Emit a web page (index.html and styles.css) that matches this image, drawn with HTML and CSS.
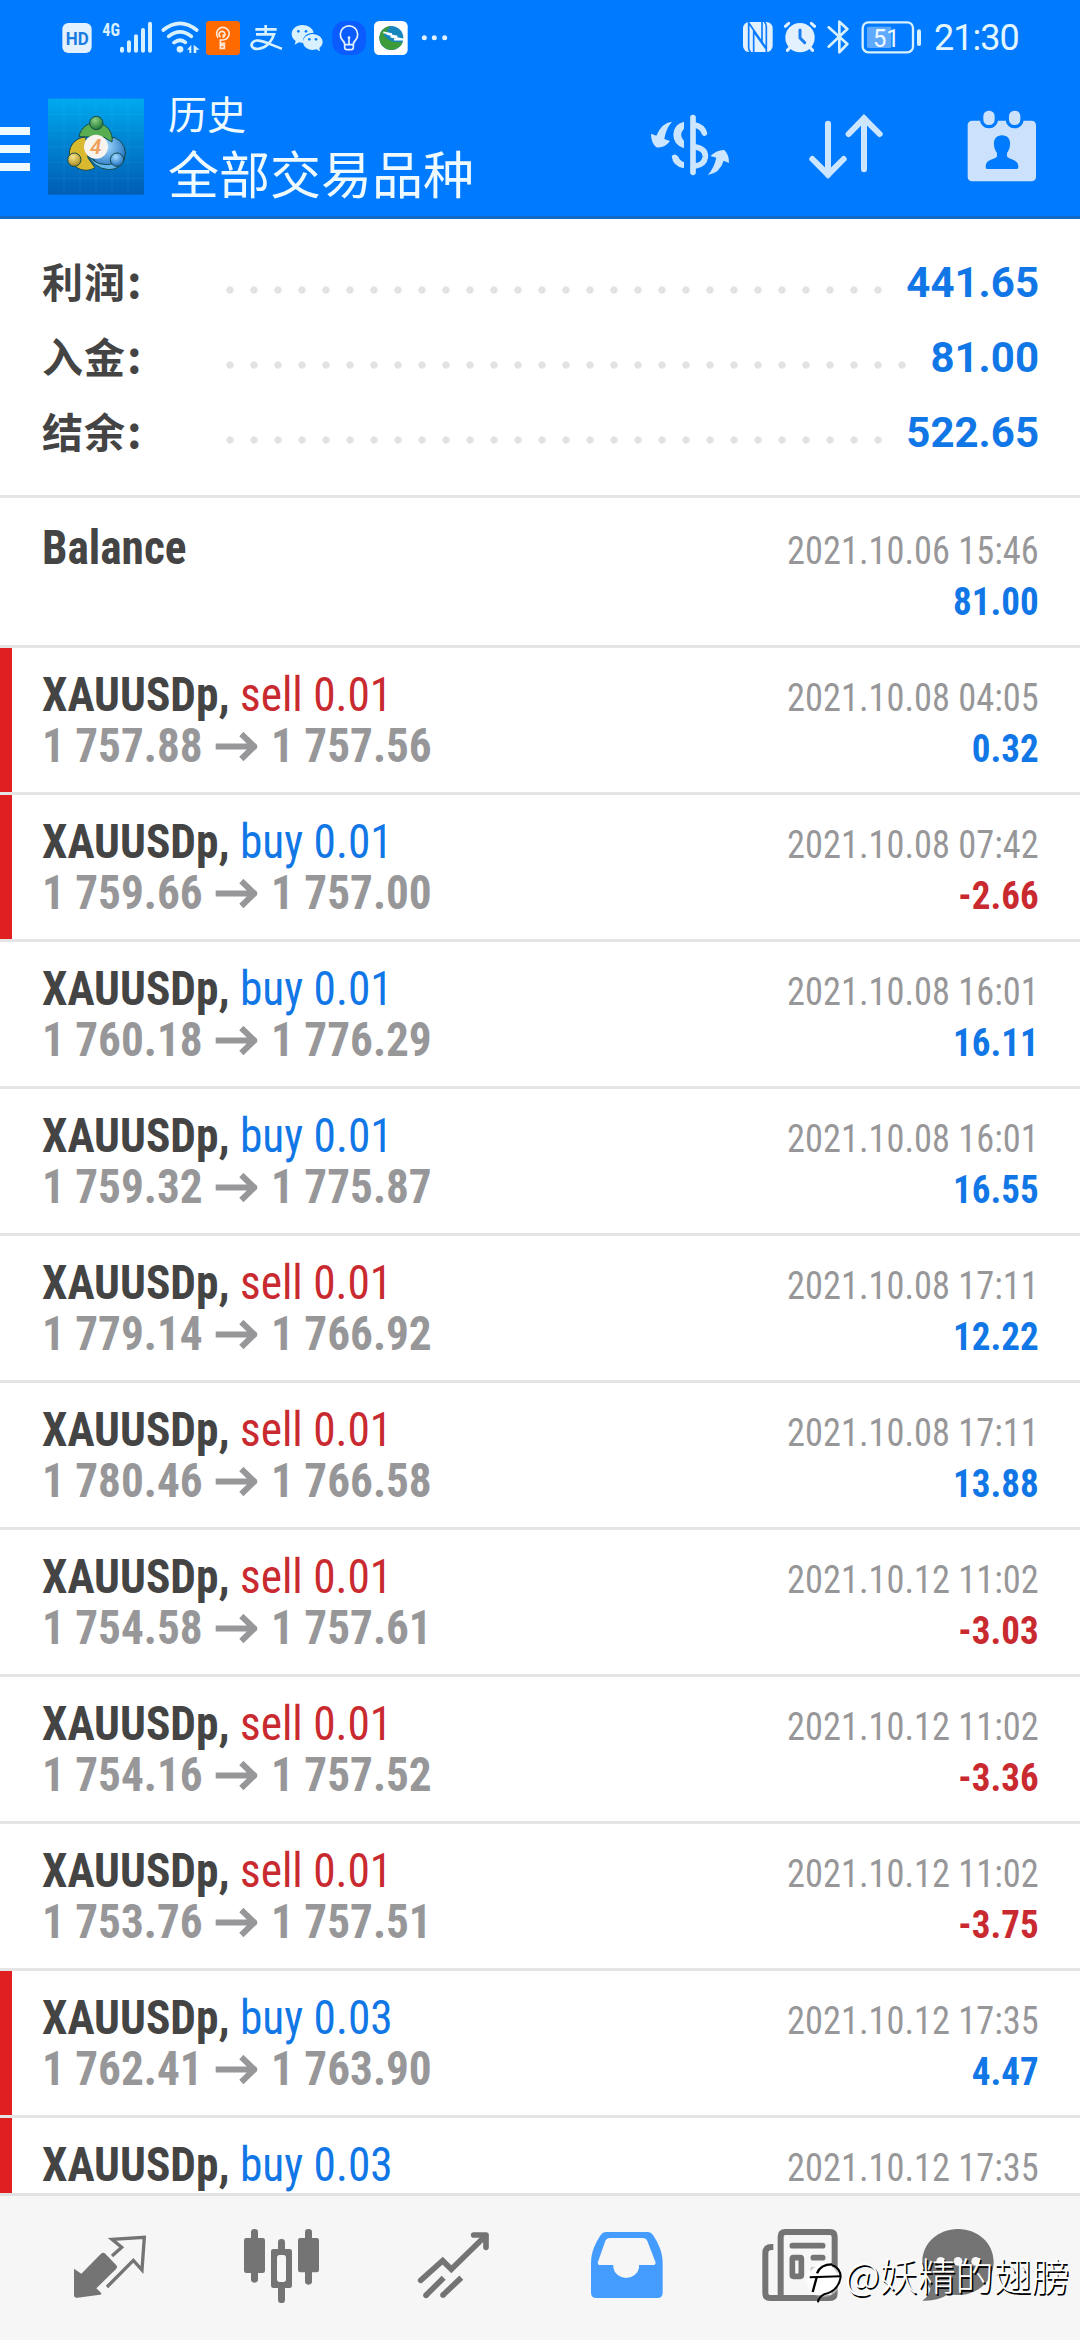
FILE: index.html
```
<!DOCTYPE html>
<html lang="zh-CN">
<head>
<meta charset="utf-8">
<title>历史</title>
<link rel="stylesheet" href="styles.css">
</head>
<body>
<header class="header">
  <div class="status">
    <div class="status-left">
      <svg class="s-hd" viewBox="183 0 96 225"><rect x="187" y="69" width="88" height="90" rx="18" fill="#e3f1ff"/><text x="197" y="135" font-family="Roboto" font-weight="700" font-size="57" textLength="69" lengthAdjust="spacingAndGlyphs" fill="#1a7be0">HD</text></svg>
      <svg class="s-signal" viewBox="303 0 159 225"><text x="307" y="107" font-family="Roboto Condensed" font-weight="700" font-size="56" textLength="53" lengthAdjust="spacingAndGlyphs" fill="#d8f1ff">4G</text><g stroke="#d8f1ff" stroke-width="12" stroke-linecap="round"><path d="M366 146v6M387 127v25M408 109v43M429 90v62M450 71v81"/></g></svg>
      <svg class="s-wifi" viewBox="483 0 120 225"><g fill="none" stroke="#d8f1ff" stroke-width="11" stroke-linecap="round"><path d="M490 90Q540 50 590 90M506 109Q540 82 574 109M522 128Q540 114 556 127"/></g><circle cx="540" cy="148" r="10" fill="#d8f1ff"/><path d="M561 149l13-15v25h-6v-10zM581 134l18 15h-10v10h-8z" fill="#d8f1ff"/></svg>
      <svg class="s-key" viewBox="615 0 108 225"><rect x="618" y="63" width="102" height="102" rx="9" fill="#ff6a00"/><g fill="none" stroke="#ffe9d6" stroke-width="5"><path d="M654 113a19 19 0 1 1 15 7h-8v25h12v-9h-7v-6h10"/><path d="M662 111a9 9 0 1 1 8 0v-8"/></g></svg>
      <svg class="s-pay" viewBox="747 0 102 225"><g fill="none" stroke="#d8f1ff" stroke-width="8"><path d="M766 88h64M797 75v26M768 103h54q-9 26-29 38-20 10-33 3c-12-9-1-25 17-22 20 2 43 16 69 24"/></g></svg>
      <svg class="s-chat" viewBox="870 0 102 225"><g fill="#d8f1ff"><path d="M907 75c-18 0-32 12-32 27 0 9 4 16 12 21l-3 11 13-7 13 2c-5-20 12-31 31-31-3-14-18-23-34-23z"/><path d="M938 102c-16 0-29 11-29 24s13 24 29 24l11-2 11 6-2-10c6-5 10-11 10-18 0-13-14-24-30-24z"/></g><g fill="#0a7cff"><circle cx="895" cy="94" r="4"/><circle cx="918" cy="94" r="4"/><circle cx="928" cy="118" r="4"/><circle cx="948" cy="118" r="4"/></g></svg>
      <svg class="s-bulb" viewBox="993 0 108 225"><rect x="997" y="63" width="101" height="102" rx="38" fill="#0b5cff"/><g fill="none" stroke="#e3f1ff" stroke-width="5" stroke-linecap="round"><path d="M1034 134q0-8-7-14a26 26 0 1 1 40 0q-7 6-7 14v8q0 7-7 7h-12q-7 0-7-7zM1034 134h26M1047 114v18"/></g><circle cx="1047" cy="113" r="4" fill="#e3f1ff"/></svg>
      <svg class="s-globe" viewBox="1119 0 108 225"><rect x="1122" y="63" width="101" height="102" rx="16" fill="#fff"/><circle cx="1174" cy="114" r="36" fill="#1686bd"/><path d="M1170 78a36 36 0 1 0 38 48q-30 4-44-8l-14-14 14-8-4-8q8 0 10-10z" fill="#3f9a3a"/><path d="M1150 97l26 5h-16l32 8h-20l40 9h-30" fill="none" stroke="#fff" stroke-width="5"/></svg>
      <svg class="s-more" viewBox="1260 0 87 225"><g fill="#e3f1ff"><circle cx="1273" cy="113" r="7.500"/><circle cx="1303" cy="113" r="7.500"/><circle cx="1334" cy="113" r="7.500"/></g></svg>
    </div>
    <div class="status-right">
      <svg class="s-nfc" viewBox="426 0 93 225"><rect x="429" y="66" width="89" height="90" rx="19" fill="#e3f1ff"/><g fill="none" stroke="#0a7cff" stroke-width="5"><path d="M446 66v77q0 9 6 13M447 70l50 72M461 156v-61l38 53M499 156V80q0-10-6-14M486 66v60"/></g></svg>
      <svg class="s-alarm" viewBox="549 0 102 225"><g stroke="#e3f1ff" stroke-width="9" stroke-linecap="round"><path d="M556 79l10-9M644 79l-10-9M570 143l-8 8M630 143l8 8"/></g><circle cx="600" cy="113" r="44" fill="#e3f1ff"/><path d="M600 90v24l14 14" fill="none" stroke="#1b7cf0" stroke-width="9" stroke-linecap="round"/></svg>
      <svg class="s-bt" viewBox="681 0 66 225"><path d="M686 82l56 50-24 25V65l24 22-56 53" fill="none" stroke="#d8f1ff" stroke-width="8" stroke-linecap="round" stroke-linejoin="round"/></svg>
      <svg class="s-battery" viewBox="783 0 186 225"><rect x="788" y="67" width="151" height="90" rx="17" fill="none" stroke="#d8f1ff" stroke-width="7"/><rect x="801" y="80" width="73" height="64" rx="5" fill="#5fa9ff"/><rect x="951" y="88" width="12" height="50" rx="6" fill="#d8f1ff"/><text x="819" y="140" font-family="Roboto" font-size="79" textLength="80" lengthAdjust="spacingAndGlyphs" fill="#eefaff">51</text></svg>
      <span class="time">21:30</span>
    </div>
  </div>
  <div class="appbar">
    <svg class="menu" viewBox="0 225 90 423"><path d="M0 381h90v24H0zM0 435h90v24H0zM0 489h90v24H0z" fill="#effaff"/></svg>
    <svg class="logo" viewBox="144 225 288 423">
      <defs>
        <linearGradient id="sky" x1="0" y1="0" x2="0" y2="1"><stop offset="0" stop-color="#00aaf0"/><stop offset=".4" stop-color="#0088d4"/><stop offset="1" stop-color="#005db4"/></linearGradient>
        <radialGradient id="gr" cx=".4" cy=".3" r=".7"><stop offset="0" stop-color="#8ccf85"/><stop offset="1" stop-color="#1f7a34"/></radialGradient>
        <radialGradient id="ye" cx=".4" cy=".3" r=".7"><stop offset="0" stop-color="#f6e58a"/><stop offset="1" stop-color="#a98a1f"/></radialGradient>
        <radialGradient id="bl" cx=".4" cy=".3" r=".7"><stop offset="0" stop-color="#a5dcff"/><stop offset="1" stop-color="#1c6fc0"/></radialGradient>
      </defs>
      <rect x="144" y="296" width="288" height="288" fill="url(#sky)"/>
      <path d="M192 296v288M240 296v288M288 296v288M336 296v288M384 296v288M144 344h288M144 392h288M144 440h288M144 488h288M144 536h288" stroke="#5cc8ff" stroke-opacity=".15" stroke-width="2"/>
      <g stroke="#174a4c" stroke-width="3">
        <circle cx="327" cy="459" r="49" fill="url(#bl)"/>
        <path d="M257 411a50 50 0 1 0 28 92L264 474z" fill="#d9b92e"/>
        <path d="M237 410a50 50 0 1 1 99 16L312 412z" fill="#58ad50"/>
        <path d="M262 461q28 46 88 28l24-14q-12 34-48 34-46-4-64-48z" fill="#5fb4ec"/>
        <circle cx="289" cy="369" r="20" fill="url(#gr)"/><circle cx="223" cy="479" r="20" fill="url(#ye)"/><circle cx="351" cy="479" r="20" fill="url(#bl)"/>
      </g>
      <circle cx="288" cy="440" r="36" fill="#f7f4f0"/>
      <text x="287" y="462" text-anchor="middle" font-family="Roboto" font-weight="600" font-style="italic" font-size="62" fill="#eda15c">4</text>
    </svg>
    <div class="titles"><div class="title">历史</div><div class="subtitle">全部交易品种</div></div>
    <svg class="a-money" viewBox="141 225 258 423">
      <g fill="none" stroke="#cce6ff" stroke-width="17" stroke-linecap="round"><path d="M279 353v164"/><path d="M313 399q-6-20-30-25"/><path d="M284 440q34 6 32 31-3 23-30 27"/></g>
      <path d="M252 365q-31 7-32 39 0 30 32 41v-23q-17-18 0-36zM215 468q9-10 20 2 5 13 17 16v19q-34-6-37-37z" fill="#cce6ff"/>
      <path d="M216 365q-31 3-47 42l-16-6q0 27 16 41 24 4 41-19l-17-6q4-30 23-52zM323 525q37-6 48-43l16 7q1-23-14-39-22-1-42 18l18 5q-7 32-26 52z" fill="#cce6ff"/>
    </svg>
    <svg class="a-sort" viewBox="618 225 243 423"><path d="M684 371v154M637 477l47 47 47-47M792 508V355M746 402l46-47 47 47" fill="none" stroke="#cce6ff" stroke-width="18" stroke-linecap="round"/></svg>
    <svg class="a-calendar" viewBox="1095 225 225 423">
      <rect x="1103" y="362" width="205" height="182" rx="13" fill="#cce1fb"/>
      <g fill="#cce1fb" stroke="#007aff" stroke-width="10"><rect x="1145" y="327" width="44" height="53" rx="21"/><rect x="1222" y="327" width="44" height="53" rx="21"/></g>
      <path d="M1206 406c-17 0-26 13-24 29 1 12 5 18 9 24v10c-4 11-34 7-34 31 0 5 2 7 6 7h86c4 0 6-2 6-7 0-24-30-20-34-31v-10c4-6 8-12 9-24 2-16-7-29-24-29z" fill="#007aff"/>
    </svg>
  </div>
</header>

<section class="summary">
  <div class="sum-row"><span class="sum-label">利润<i>:</i></span><span class="dots"></span><span class="sum-value">441.65</span></div>
  <div class="sum-row"><span class="sum-label">入金<i>:</i></span><span class="dots"></span><span class="sum-value">81.00</span></div>
  <div class="sum-row"><span class="sum-label">结余<i>:</i></span><span class="dots"></span><span class="sum-value">522.65</span></div>
</section>

<svg class="defs"><symbol id="arrow" viewBox="0 0 42 30" preserveAspectRatio="none"><path d="M0 14.500H38M26 2l13 12.500L26 27" fill="none" stroke="#979799" stroke-width="6"/></symbol></svg>

<main class="list">
  <div class="row balance"><div class="deal"><div class="line"><b>Balance</b></div></div><div class="info"><div class="date">2021.10.06 15:46</div><div class="up">81.00</div></div></div>
  <div class="row marked"><div class="deal"><div class="line"><b>XAUUSDp,</b> <span class="sell">sell 0.01</span></div><div class="price">1 757.88<svg><use href="#arrow"/></svg>1 757.56</div></div><div class="info"><div class="date">2021.10.08 04:05</div><div class="up">0.32</div></div></div>
  <div class="row marked"><div class="deal"><div class="line"><b>XAUUSDp,</b> <span class="buy">buy 0.01</span></div><div class="price">1 759.66<svg><use href="#arrow"/></svg>1 757.00</div></div><div class="info"><div class="date">2021.10.08 07:42</div><div class="down">-2.66</div></div></div>
  <div class="row"><div class="deal"><div class="line"><b>XAUUSDp,</b> <span class="buy">buy 0.01</span></div><div class="price">1 760.18<svg><use href="#arrow"/></svg>1 776.29</div></div><div class="info"><div class="date">2021.10.08 16:01</div><div class="up">16.11</div></div></div>
  <div class="row"><div class="deal"><div class="line"><b>XAUUSDp,</b> <span class="buy">buy 0.01</span></div><div class="price">1 759.32<svg><use href="#arrow"/></svg>1 775.87</div></div><div class="info"><div class="date">2021.10.08 16:01</div><div class="up">16.55</div></div></div>
  <div class="row"><div class="deal"><div class="line"><b>XAUUSDp,</b> <span class="sell">sell 0.01</span></div><div class="price">1 779.14<svg><use href="#arrow"/></svg>1 766.92</div></div><div class="info"><div class="date">2021.10.08 17:11</div><div class="up">12.22</div></div></div>
  <div class="row"><div class="deal"><div class="line"><b>XAUUSDp,</b> <span class="sell">sell 0.01</span></div><div class="price">1 780.46<svg><use href="#arrow"/></svg>1 766.58</div></div><div class="info"><div class="date">2021.10.08 17:11</div><div class="up">13.88</div></div></div>
  <div class="row"><div class="deal"><div class="line"><b>XAUUSDp,</b> <span class="sell">sell 0.01</span></div><div class="price">1 754.58<svg><use href="#arrow"/></svg>1 757.61</div></div><div class="info"><div class="date">2021.10.12 11:02</div><div class="down">-3.03</div></div></div>
  <div class="row"><div class="deal"><div class="line"><b>XAUUSDp,</b> <span class="sell">sell 0.01</span></div><div class="price">1 754.16<svg><use href="#arrow"/></svg>1 757.52</div></div><div class="info"><div class="date">2021.10.12 11:02</div><div class="down">-3.36</div></div></div>
  <div class="row"><div class="deal"><div class="line"><b>XAUUSDp,</b> <span class="sell">sell 0.01</span></div><div class="price">1 753.76<svg><use href="#arrow"/></svg>1 757.51</div></div><div class="info"><div class="date">2021.10.12 11:02</div><div class="down">-3.75</div></div></div>
  <div class="row marked"><div class="deal"><div class="line"><b>XAUUSDp,</b> <span class="buy">buy 0.03</span></div><div class="price">1 762.41<svg><use href="#arrow"/></svg>1 763.90</div></div><div class="info"><div class="date">2021.10.12 17:35</div><div class="up">4.47</div></div></div>
  <div class="row marked"><div class="deal"><div class="line"><b>XAUUSDp,</b> <span class="buy">buy 0.03</span></div></div><div class="info"><div class="date">2021.10.12 17:35</div></div></div>
</main>

<nav class="tabs">
  <svg viewBox="72 18 516 432"><path d="M303 191q7-5 13 0l33 35q4 5 0 10l-60 59 14 13q3 5-3 6l-68 9q-10 1-10-8V236l22 15z" fill="#747474"/><path d="M336 198l29-26-29-24 97-6-7 98-26-29-79 80" fill="none" stroke="#747474" stroke-width="10"/></svg>
  <svg viewBox="588 18 516 432"><g fill="#747474"><rect x="753" y="117" width="21" height="161" rx="10"/><rect x="732" y="144" width="63" height="105" rx="7"/><rect x="834" y="147" width="21" height="192" rx="10"/><rect x="813" y="177" width="63" height="117" rx="7"/><rect x="915" y="117" width="21" height="167" rx="10"/><rect x="894" y="144" width="63" height="103" rx="7"/></g><rect x="831" y="195" width="27" height="81" rx="8" fill="#f6f6f6"/></svg>
  <svg viewBox="24 18 516 432"><g fill="none" stroke="#747474" stroke-width="17"><path d="M182 271l66-59 26 26L376 138" stroke-linecap="round"/><path d="M341 135h37v37" stroke-linecap="round" stroke-linejoin="round"/><path d="M198 316l53-53M249 315l55-52"/></g><g fill="#747474"><circle cx="198" cy="316" r="8.500"/><circle cx="249" cy="315" r="8.500"/></g></svg>
  <svg viewBox="540 18 516 432"><path d="M737 126h127q9 0 15 9c16 25 29 51 29 85v88q0 16-16 16H709q-16 0-16-16v-88c0-34 13-60 29-85q6-9 15-9z" fill="#459cff"/><path d="M750 144h98q10 0 14 9l24 62q3 10-8 10h-41v8a39 37 0 0 1-77 0v-8h-38q-11 0-8-10l22-62q4-9 14-9z" fill="#f6f6f6"/></svg>
  <svg viewBox="-24 18 516 432"><path d="M160 171h-5q-19 0-19 19v120q0 14 14 14h180q14 0 14-14V140q0-14-14-14H196q-14 0-14 14v184" fill="none" stroke="#747474" stroke-width="18"/><g stroke="#747474" stroke-width="17" stroke-linecap="round"><path d="M217 167h91M280 203h28M280 239h28"/></g><rect x="217" y="203" width="27" height="56" rx="3" fill="none" stroke="#747474" stroke-width="17"/></svg>
  <svg viewBox="492 18 516 432"><path d="M714 117c60 0 107 43 107 99s-47 99-107 99q-15 0-29-3-30 22-78 20 22-13 24-37-24-30-24-79c0-56 47-99 107-99z" fill="#747474"/><g fill="#f6f6f6"><circle cx="662" cy="214" r="13"/><circle cx="714" cy="214" r="13"/><circle cx="767" cy="214" r="13"/></g></svg>
</nav>

<div class="watermark">
  <svg viewBox="250 195 120 150"><defs><radialGradient id="glow"><stop offset=".75" stop-color="#fff"/><stop offset="1" stop-color="#fff" stop-opacity="0"/></radialGradient></defs><circle cx="311" cy="268" r="56" fill="url(#glow)"/><g fill="none" stroke="#000"><path d="M279 306l12-44M292 250q10-27 45-27" stroke-width="7"/><path d="M270 262l94-3" stroke-width="6"/><path d="M337 225q26 10 26 36-6 42-50 52-17 9-18 24" stroke-width="6"/></g></svg>
  <span>@妖精的翅膀</span>
</div>
</body>
</html>
```

FILE: styles.css
```
* { box-sizing: border-box; }

body {
  margin: 0;
  width: 1080px;
  height: 2340px;
  display: flex;
  flex-direction: column;
  overflow: hidden;
  position: relative;
  background: #fff;
  font-family: "Roboto Condensed", "Noto Sans CJK SC", sans-serif;
}

svg { display: block; flex: none; }
.defs { width: 0; height: 0; }

.header {
  height: 219px;
  flex: none;
  background: #007aff;
  border-bottom: 3px solid #126bc4;
}

.status {
  height: 75px;
  display: flex;
  justify-content: space-between;
}
.status-left { display: flex; padding-left: 61px; }
.status-right { display: flex; padding-right: 60px; }
.status svg { height: 75px; }
.s-hd { width: 32px; margin-right: 8px; }
.s-signal { width: 53px; margin-right: 7px; }
.s-wifi { width: 40px; margin-right: 4px; }
.s-key { width: 36px; margin-right: 8px; }
.s-pay { width: 34px; margin-right: 7px; }
.s-chat { width: 34px; margin-right: 7px; }
.s-bulb { width: 36px; margin-right: 6px; }
.s-globe { width: 36px; margin-right: 11px; }
.s-more { width: 29px; }
.s-nfc { width: 31px; margin-right: 10px; }
.s-alarm { width: 34px; margin-right: 10px; }
.s-bt { width: 22px; margin-right: 12px; }
.s-battery { width: 62px; margin-right: 11px; }
.time {
  width: 86px;
  font: 400 36px/77px Roboto, sans-serif;
  letter-spacing: -1px;
  color: #e3f6ff;
  white-space: nowrap;
}

.appbar { height: 141px; display: flex; }
.appbar svg { height: 141px; }
.menu { width: 30px; margin-right: 18px; }
.logo { width: 96px; }
.titles {
  flex: 1;
  padding: 13px 0 0 24px;
  color: #effaff;
  font-family: "Noto Sans CJK SC", sans-serif;
}
.title { font-size: 39px; line-height: 48px; }
.subtitle { font-size: 51px; line-height: 73px; white-space: nowrap; }
.a-money { width: 86px; margin-right: 73px; }
.a-sort { width: 81px; margin-right: 78px; }
.a-calendar { width: 75px; margin-right: 40px; }

.summary {
  height: 279px;
  flex: none;
  padding: 25px 42px 0;
  border-bottom: 3px solid #e5e5e5;
}
.sum-row { height: 75px; display: flex; line-height: 75px; }
.sum-label {
  width: 176px;
  font-family: "Noto Sans CJK SC", sans-serif;
  font-weight: 700;
  font-size: 41px;
  line-height: 73px;
  letter-spacing: 1px;
  color: #444;
}
.sum-label i { font-style: normal; font-size: 45px; line-height: 1; margin-left: 1px; }
.dots {
  flex: 1;
  height: 8px;
  margin: 42px 15px 0 0;
  background: radial-gradient(circle at 12px 4px, #e2e2e2 3.300px, transparent 4px) 0 0 / 24px 8px repeat-x;
}
.sum-value {
  font-family: Roboto, sans-serif;
  font-weight: 700;
  font-size: 42px;
  line-height: 77px;
  margin-right: -1px;
  color: #1277e6;
}

.list { flex: 1; min-height: 0; overflow: hidden; }
.row {
  height: 147px;
  display: flex;
  justify-content: space-between;
  padding: 21px 42px 0;
  border-bottom: 3px solid #e5e5e5;
  line-height: 51px;
  white-space: nowrap;
}
.balance { height: 150px; padding-top: 24px; }
.marked { background: linear-gradient(#e02020, #e02020) 0 0 / 12px 144px no-repeat; }

/* Extra-narrow cut of the condensed face */
.line, .price { font-size: 48px; transform-origin: 0 0; }
.line { color: #444; transform: scaleX(.945); }
.line b { font-weight: 700; }
.line .sell { color: #c92a2f; }
.line .buy { color: #1277e6; }
.price {
  display: flex;
  font-weight: 700;
  color: #979799;
  transform: scaleX(.942);
}
.price svg { width: 44.600px; height: 30px; margin: 12px 14.500px 0 13.500px; }
.info { padding-top: 4px; text-align: right; font-size: 39px; }
.date, .up, .down { transform-origin: 100% 0; }
.date { color: #979799; transform: translateX(1px) scaleX(.933); }
.up, .down { font-weight: 700; transform: translateX(1px) scaleX(.95); }
.up { color: #1277e6; }
.down { color: #c92a2f; }

.tabs {
  height: 147px;
  flex: none;
  display: flex;
  padding-left: 24px;
  background: #f6f6f6;
  border-top: 3px solid #e2e2e2;
}
.tabs svg { width: 172px; height: 144px; }

.watermark {
  position: absolute;
  left: 803px;
  top: 2255px;
  display: flex;
  color: #fff;
  text-shadow: 1.500px 1.500px .5px #000;
  white-space: nowrap;
}
.watermark svg { width: 40px; height: 50px; }
.watermark span {
  margin-left: 2px;
  font: 300 38px/38px "Noto Sans CJK SC", sans-serif;
}
```
